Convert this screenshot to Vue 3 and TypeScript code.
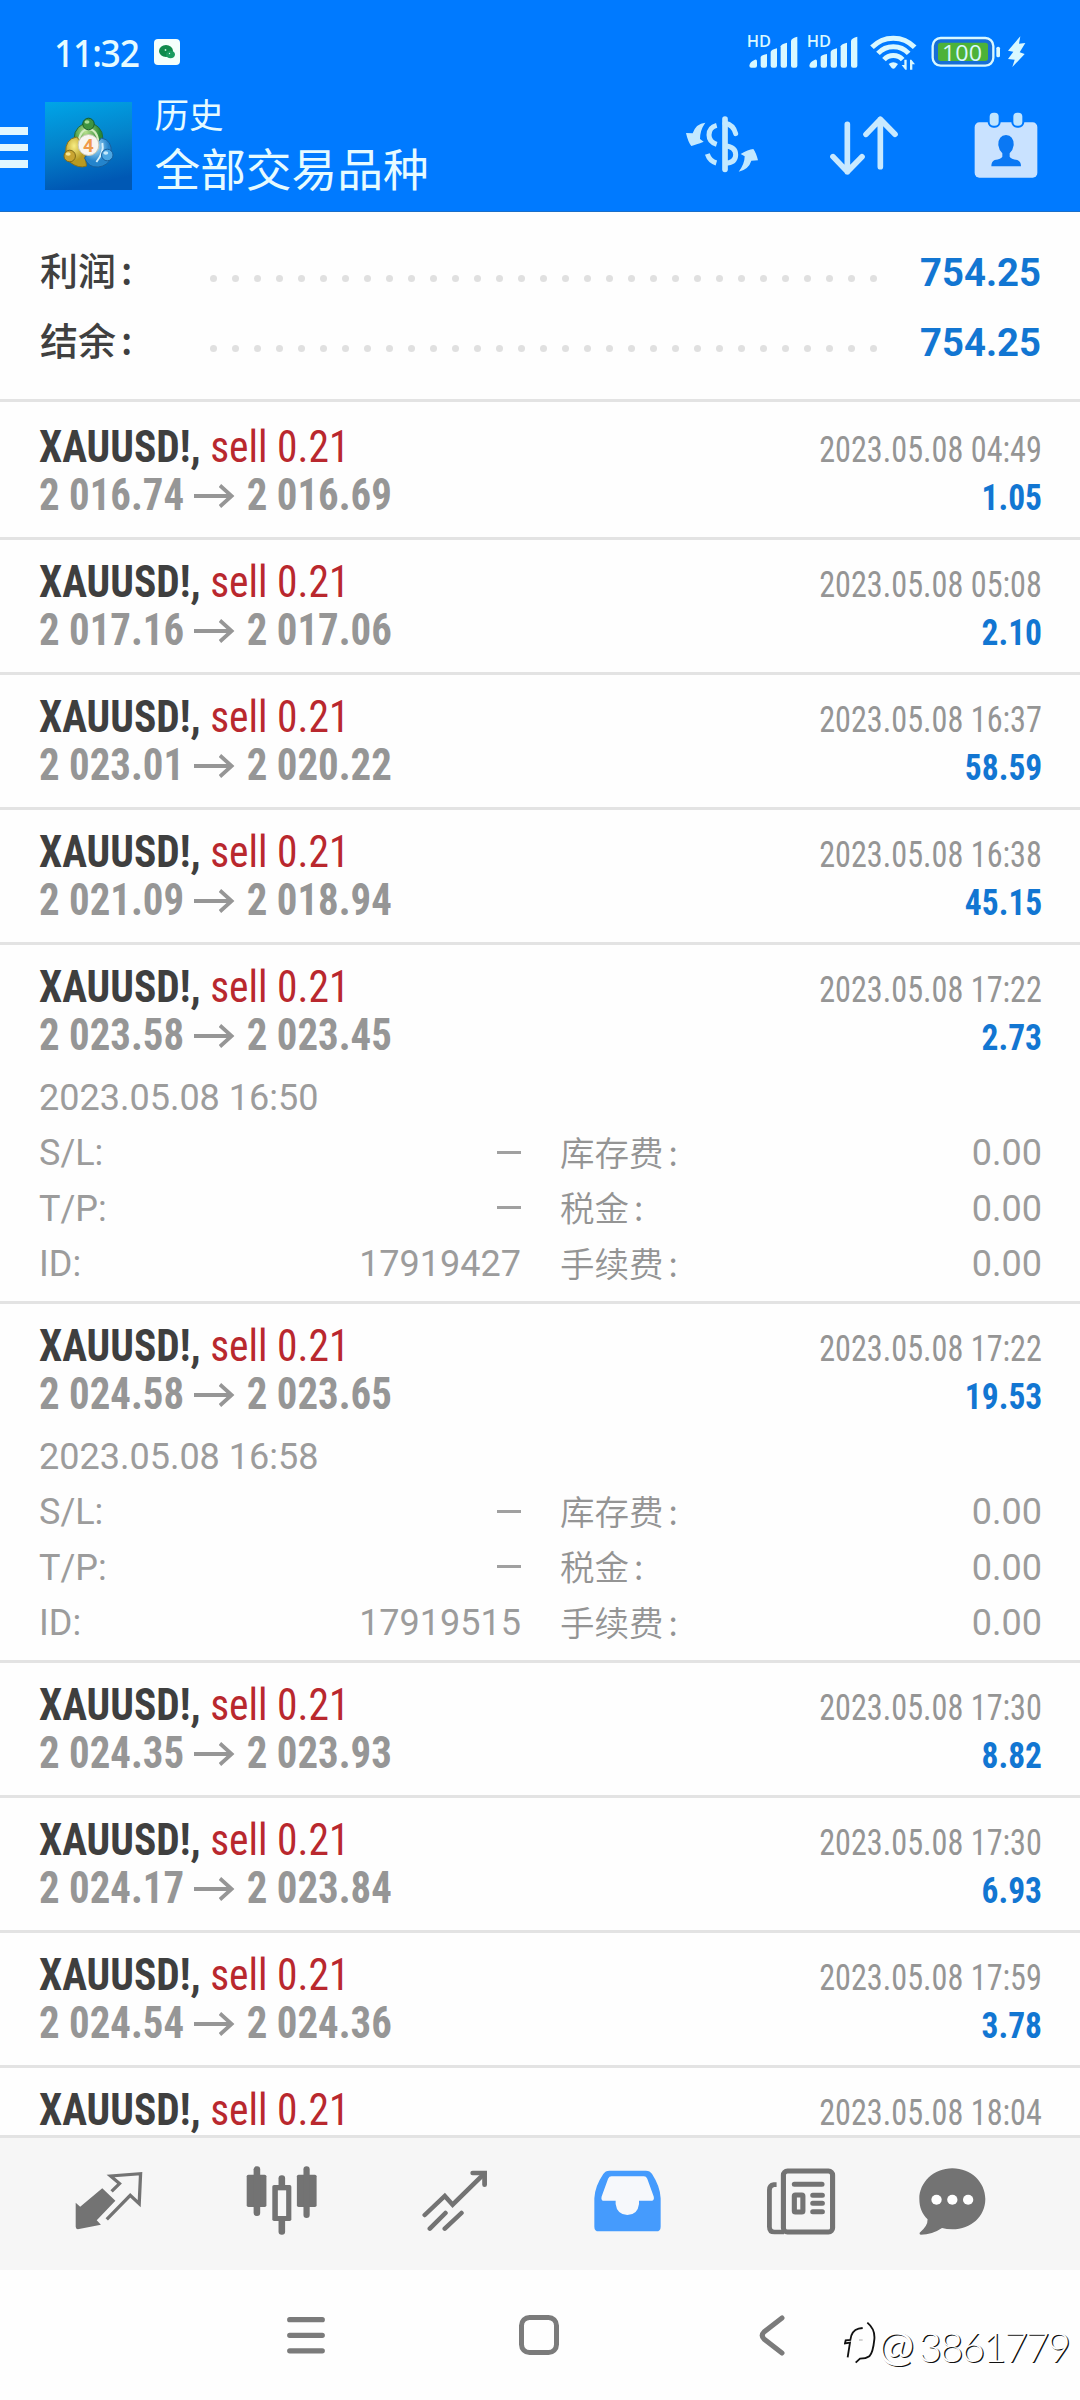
<script setup lang="ts">
interface Detail {
  opened: string
  id: string
}
interface Deal {
  time: string
  from?: string
  to?: string
  profit?: string
  detail?: Detail
}

const totals = [
  { label: '利润', value: '754.25' },
  { label: '结余', value: '754.25' },
]

const deals: Deal[] = [
  { from: '2 016.74', to: '2 016.69', time: '2023.05.08 04:49', profit: '1.05' },
  { from: '2 017.16', to: '2 017.06', time: '2023.05.08 05:08', profit: '2.10' },
  { from: '2 023.01', to: '2 020.22', time: '2023.05.08 16:37', profit: '58.59' },
  { from: '2 021.09', to: '2 018.94', time: '2023.05.08 16:38', profit: '45.15' },
  { from: '2 023.58', to: '2 023.45', time: '2023.05.08 17:22', profit: '2.73', detail: { opened: '2023.05.08 16:50', id: '17919427' } },
  { from: '2 024.58', to: '2 023.65', time: '2023.05.08 17:22', profit: '19.53', detail: { opened: '2023.05.08 16:58', id: '17919515' } },
  { from: '2 024.35', to: '2 023.93', time: '2023.05.08 17:30', profit: '8.82' },
  { from: '2 024.17', to: '2 023.84', time: '2023.05.08 17:30', profit: '6.93' },
  { from: '2 024.54', to: '2 024.36', time: '2023.05.08 17:59', profit: '3.78' },
  { time: '2023.05.08 18:04' },
]

function rows(d: Detail) {
  return [
    { label: 'S/L:', value: '—', fee: '库存费' },
    { label: 'T/P:', value: '—', fee: '税金' },
    { label: 'ID:', value: d.id, fee: '手续费' },
  ]
}
</script>

<template>
  <div class="phone">
    <header class="top">
      <div class="status">
        <span class="clock">11:32</span>
        <svg class="chat-badge" viewBox="0 0 26 26">
          <rect width="26" height="26" rx="4" fill="#f4fffb" />
          <ellipse cx="12" cy="12" rx="7" ry="6" fill="#0f8a4c" />
          <ellipse cx="16.500" cy="15.500" rx="4.500" ry="3.800" fill="#1a9c60" />
          <circle cx="11.500" cy="11" r=".9" fill="#bff0d8" />
          <circle cx="15.500" cy="14.500" r=".7" fill="#d8ffe9" />
        </svg>
        <svg class="status-icons" viewBox="305 70 855 150" fill="#d9f8ff">
          <g v-for="x in [0, 180]" :key="x" :transform="`translate(${x} 0)`">
            <text x="319" y="143" font-size="46" font-weight="600" textLength="73" lengthAdjust="spacingAndGlyphs">HD</text>
            <path d="M327 198Q328 186 344 180Q350 178 350 186V198Q350 204 344 204H333Q327 204 327 198z" />
            <path d="M361 172Q362 166 380 163V198Q380 204 374 204H367Q361 204 361 198z" />
            <path d="M391 157Q393 150 410 146V198Q410 204 404 204H397Q391 204 391 198z" />
            <path d="M421 140Q423 133 440 129V198Q440 204 434 204H427Q421 204 421 198z" />
            <path d="M452 123Q454 115 471 111V198Q471 204 465 204H458Q452 204 452 198z" />
          </g>
          <g fill="none" stroke="#d9f8ff" stroke-width="15">
            <path d="M695 143A88 88 0 0 1 823 143" />
            <path d="M713 161A63 63 0 0 1 805 161" />
            <path d="M731 180A38 38 0 0 1 787 180" />
          </g>
          <path d="M745 193Q759 182 773 193L764 205Q759 210 754 205z" />
          <path d="M784 196h8v-16h7v30h-4zM824 194h-8v16h-7v-30h4z" />
          <rect x="877" y="115" width="182" height="83" rx="24" fill="#176fd6" stroke="#d9f8ff" stroke-width="7" />
          <rect x="893" y="129" width="150" height="55" rx="8" fill="#4db238" />
          <text x="905" y="183" font-size="64" font-weight="500" textLength="120" lengthAdjust="spacingAndGlyphs">100</text>
          <rect x="1068" y="141" width="11" height="32" rx="5" />
          <path d="M1140 110L1103 153L1119 156L1103 178L1123 180L1116 202L1153 163L1138 158L1155 130L1136 132z" />
        </svg>
      </div>
      <div class="bar">
        <div class="burger"><i></i><i></i><i></i></div>
        <svg class="logo" viewBox="0 0 88 88" preserveAspectRatio="none">
          <defs>
            <linearGradient id="bg" x1="0" y1="0" x2=".2" y2="1">
              <stop offset="0" stop-color="#00a5e8" />
              <stop offset=".5" stop-color="#0484cc" />
              <stop offset="1" stop-color="#0058b4" />
            </linearGradient>
            <radialGradient id="gr" cx=".4" cy=".3"><stop offset="0" stop-color="#b8e08c" /><stop offset="1" stop-color="#2b8a35" /></radialGradient>
            <radialGradient id="ye" cx=".4" cy=".3"><stop offset="0" stop-color="#f8ee84" /><stop offset="1" stop-color="#b89a22" /></radialGradient>
            <radialGradient id="bl" cx=".4" cy=".3"><stop offset="0" stop-color="#b2e2fa" /><stop offset="1" stop-color="#2484cc" /></radialGradient>
          </defs>
          <rect width="88" height="88" fill="url(#bg)" />
          <ellipse cx="44" cy="36" rx="14.500" ry="15" fill="url(#gr)" stroke="#226a38" />
          <path d="M34 40Q35 28 44 27Q53 28 54 40" fill="none" stroke="#d4ecc0" stroke-width="2" />
          <path d="M21 51Q20 37 32 35Q38 40 40 50L42 64Q34 67 25 60z" fill="url(#ye)" stroke="#84701c" />
          <path d="M67 51Q68 38 57 36Q52 42 40 56Q44 66 54 65Q63 64 67 56z" fill="url(#bl)" stroke="#175f9c" />
          <path d="M58 41Q60 50 52 60" fill="none" stroke="#d6f0fc" stroke-width="2" />
          <circle cx="44" cy="22" r="5.800" fill="#3e9440" stroke="#175a28" />
          <circle cx="25" cy="54" r="5.800" fill="#c9a431" stroke="#806a18" />
          <circle cx="63" cy="53" r="5.800" fill="#4ba6e2" stroke="#175f9c" />
          <ellipse cx="42.500" cy="20" rx="2.500" ry="1.800" fill="#a8dc98" />
          <ellipse cx="23.500" cy="52" rx="2.500" ry="1.800" fill="#f6e694" />
          <ellipse cx="61.500" cy="51" rx="2.500" ry="1.800" fill="#c4e9fc" />
          <circle cx="44" cy="43" r="10.500" fill="#f8f5f0" stroke="#c8c8b4" />
          <text x="44" y="50" text-anchor="middle" font-size="19" font-weight="700" fill="#f09a4a">4</text>
        </svg>
        <div class="titles">
          <div class="small">历史</div>
          <div class="big">全部交易品种</div>
        </div>
        <svg class="act dollar" viewBox="48 48 218 170">
          <g fill="#c3e9ff">
            <path d="M106 68Q78 70 68 100L48 99Q54 126 64 138Q78 134 101 125L90 117Q90 90 106 68z" />
            <path d="M206 215Q236 208 244 182L264 181Q258 158 250 147Q234 148 212 162L224 169Q224 192 206 215z" />
          </g>
          <g fill="none" stroke="#c3e9ff" stroke-width="15">
            <path d="M140 76Q117 82 117 105Q117 126 140 133" />
            <path d="M112 162Q119 183 139 189" />
            <path d="M165 70Q190 74 197 101" stroke-linecap="round" />
            <path d="M165 138Q197 140 197 164Q197 189 165 189" />
            <path d="M165 57V208" stroke-width="17" stroke-linecap="round" />
          </g>
        </svg>
        <svg class="act sort" viewBox="483 48 204 177">
          <path d="M535 73V215M492 170L535 215L579 170M634 200V58M591 103L634 58L678 103" fill="none" stroke="#c8e9ff" stroke-width="17" stroke-linecap="round" stroke-linejoin="round" />
        </svg>
        <svg class="act cal" viewBox="1008 336 192 200">
          <rect x="1010" y="367" width="188" height="166" rx="14" fill="#c9e2ff" />
          <rect x="1049" y="330" width="39" height="53" rx="17" fill="#007aff" />
          <rect x="1120" y="330" width="39" height="53" rx="17" fill="#007aff" />
          <rect x="1055" y="338" width="27" height="39" rx="12" fill="#c0e5ff" />
          <rect x="1126" y="338" width="27" height="39" rx="12" fill="#c0e5ff" />
          <path d="M1104 405Q1128 407 1127 436Q1125 451 1115 460V470Q1118 477 1138 480Q1149 484 1149 499H1060Q1060 484 1070 480Q1090 477 1093 470V460Q1083 451 1081 436Q1080 407 1104 405z" fill="#0a78f4" />
        </svg>
      </div>
    </header>

    <section class="totals">
      <div v-for="t in totals" :key="t.label" class="total">
        <span class="t-label">{{ t.label }}<b>:</b></span>
        <span class="dots"><i v-for="n in 31" :key="n"></i></span>
        <span class="t-value">{{ t.value }}</span>
      </div>
    </section>

    <main class="list">
      <article v-for="(d, i) in deals" :key="i" class="deal">
        <div class="line">
          <span class="name"><b>XAUUSD!,</b> <em>sell 0.21</em></span>
          <span class="date">{{ d.time }}</span>
        </div>
        <div v-if="d.from" class="line">
          <span class="prices">{{ d.from }}<svg class="arrow" viewBox="0 0 44 24"><path d="M0 12H41M28 1.500L40.500 12L28 22.500" fill="none" stroke="#969696" stroke-width="4" /></svg>{{ d.to }}</span>
          <span class="profit">{{ d.profit }}</span>
        </div>
        <div v-if="d.detail" class="detail">
          <div class="d-row"><span>{{ d.detail.opened }}</span></div>
          <div v-for="r in rows(d.detail)" :key="r.label" class="d-row">
            <span class="half"><span>{{ r.label }}</span><i v-if="r.value === '—'" class="dash"></i><span v-else>{{ r.value }}</span></span>
            <span class="half"><span class="cjk">{{ r.fee }}<b>:</b></span><span>0.00</span></span>
          </div>
        </div>
      </article>
    </main>

    <nav class="tabs">
      <div class="tab">
        <svg width="68" height="60" viewBox="217 338 197 180" preserveAspectRatio="none">
          <path d="M296 390L334 427L280 486L292 499L225 513Q219 512 219 505V433L232 445z" fill="#737373" />
          <path d="M323 399L346 376L320 353L407 346L403 436L377 411L309 483" fill="none" stroke="#737373" stroke-width="9.500" />
        </svg>
      </div>
      <div class="tab">
        <svg width="72" height="70" viewBox="713 322 208 210" preserveAspectRatio="none" fill="#737373">
          <rect x="715" y="348" width="57" height="97" rx="5" /><rect x="735" y="323" width="19" height="149" rx="9" />
          <rect x="860" y="348" width="57" height="97" rx="5" /><rect x="879" y="323" width="18" height="155" rx="9" />
          <rect x="807" y="350" width="19" height="178" rx="9" /><rect x="789" y="379" width="55" height="108" rx="5" />
          <rect x="805" y="395" width="24" height="77" fill="#f6f6f6" />
        </svg>
      </div>
      <div class="tab">
        <svg width="66" height="64" viewBox="1222 328 194 192" preserveAspectRatio="none" fill="none" stroke="#737373" stroke-width="13.500" stroke-linecap="round">
          <path d="M1230 466L1289 409L1312 435L1405 342M1245 507L1291 460M1289 507L1338 460" />
          <path d="M1371 340H1406V375" stroke-width="14" />
        </svg>
      </div>
      <div class="tab">
        <svg width="67" height="62" viewBox="157 330 195 186" preserveAspectRatio="none">
          <path d="M202 332H308Q320 332 326 342Q350 380 351 415V500Q351 514 338 514H171Q158 514 158 500V415Q159 380 184 342Q190 332 202 332z" fill="#459bfd" />
          <path d="M208 349H302Q309 349 312 356L331 410Q333 421 325 422H288V432Q284 465 254 465Q224 464 220 432V422H184Q177 421 179 410L198 356Q201 349 208 349z" fill="#f6f8fb" />
        </svg>
      </div>
      <div class="tab">
        <svg width="70" height="67" viewBox="655 322 205 201" preserveAspectRatio="none" fill="none" stroke="#737373" stroke-width="15">
          <rect x="706" y="331" width="144" height="183" rx="12" />
          <path d="M686 372H678Q665 374 665 388V498Q665 514 680 514H708" stroke-width="14" />
          <path d="M738 371H819M792 404H820M792 428H820M792 453H820" stroke-linecap="round" />
          <rect x="738" y="403" width="25" height="51" rx="3" />
        </svg>
      </div>
      <div class="tab last">
        <svg width="67" height="67" viewBox="1102 322 195 201" preserveAspectRatio="none">
          <path d="M1199 323C1254 323 1295 365 1295 415C1295 467 1254 506 1199 506Q1182 506 1169 502Q1141 522 1107 522Q1102 521 1104 516Q1128 496 1127 476C1111 460 1103 440 1103 415C1103 365 1145 323 1199 323z" fill="#737373" />
          <circle cx="1153" cy="417" r="15" fill="#fff" /><circle cx="1199" cy="417" r="15" fill="#fff" /><circle cx="1245" cy="417" r="15" fill="#fff" />
        </svg>
      </div>
    </nav>

    <footer class="sys">
      <svg class="k-menu" viewBox="0 0 38 37" stroke="#7b7b7b" stroke-width="5.200" stroke-linecap="round"><path d="M2.700 2.700H35.300M2.700 18.300H35.300M2.700 33.800H35.300" /></svg>
      <svg class="k-home" viewBox="0 0 40 40"><rect x="2.500" y="2.500" width="35" height="35" rx="8" fill="none" stroke="#7b7b7b" stroke-width="5" /></svg>
      <svg class="k-back" viewBox="0 0 26 41"><path d="M23 3L5 17Q1.500 20.500 5 24L23 38" fill="none" stroke="#7b7b7b" stroke-width="5" stroke-linecap="round" /></svg>
      <div class="mark">
        <svg width="34" height="44" viewBox="28 40 102 132" fill="none" stroke="#111">
          <path d="M39 146Q43 120 46 102L31 104L33 95L47 94Q50 66 72 60L84 58" stroke-width="5.500" />
          <path d="M98 42Q122 62 119 92Q115 132 104 143Q94 150 76 150L63 162" stroke-width="5.500" />
          <path d="M73 94H84" stroke="#aaa" stroke-width="3" />
        </svg>
        <span class="at">@</span><span class="num">3861779</span>
      </div>
    </footer>
  </div>
</template>

<style>
body { background: #fefefe; }
</style>

<style scoped>
.phone {
  width: 1080px;
  height: 2400px;
  overflow: hidden;
  display: flex;
  flex-direction: column;
  background: #fefefe;
  font-family: Roboto, 'Noto Sans CJK SC', sans-serif;
}
svg { display: block; flex: none; }
.top {
  height: 211.500px;
  box-sizing: border-box;
  background: #007aff;
  border-bottom: 1.500px solid #1a6fc9;
  color: #e6fbff;
}
.status { display: flex; height: 90px; padding: 0 13px 0 54px; align-items: flex-start; }
.clock { width: 100px; margin-top: 24px; font: 500 38.5px/56px 'Noto Sans', sans-serif; white-space: nowrap; transform: scaleX(.92); transform-origin: 0 50%; letter-spacing: -1.300px; }
.chat-badge { width: 26px; height: 26px; margin-top: 39px; }
.status-icons { width: 285px; height: 50px; margin: 23px 40px 0 auto; font-family: 'Open Sans', sans-serif; }
.bar { display: flex; height: 119px; align-items: flex-start; }
.burger { width: 27.500px; margin: 37px 17px 0 0; display: flex; flex-direction: column; gap: 9px; }
.burger i { height: 7.700px; background: #e0f7ff; }
.logo { width: 87px; height: 88px; margin-top: 12px; }
.titles { margin: 3px 0 0 23px; font-family: 'Noto Sans CJK SC', sans-serif; width: 532px; flex: none; }
.small { font-size: 34.500px; line-height: 40px; height: 40px; }
.big { font-size: 45.700px; line-height: 60px; margin-top: 4px; height: 60px; }
.dollar { width: 72.700px; height: 56.700px; margin: 26px 0 0 -1px; }
.sort { width: 68px; height: 59px; margin: 26px 0 0 72px; }
.cal { width: 64px; height: 66.700px; margin: 22px 0 0 76px; }

.totals { height: 187.500px; padding: 24.500px 39px 0 40px; box-sizing: border-box; flex: none; }
.total { display: flex; height: 70px; align-items: center; }
.t-label { width: 170px; height: 74px; font: 500 38px/70px 'Noto Sans CJK SC', sans-serif; color: #404040; white-space: nowrap; }
.t-label b, .cjk b { font-weight: inherit; margin-left: 5px; }
.dots { display: flex; width: 667px; justify-content: space-between; margin-top: 15px; }
.dots i { width: 7px; height: 7px; border-radius: 50%; background: #e0e0e0; }
.t-value { margin: 2px 0 0 auto; font-size: 38.300px; font-weight: 700; color: #1276d2; }

.list { height: 1736px; overflow: hidden; flex: none; }
.deal { border-top: 3px solid #e3e3e3; padding: 18px 38px 0 39px; height: 135px; box-sizing: border-box; }
.deal:first-child { padding-top: 21px; height: 138px; }
.deal:last-child { height: 72px; }
.deal:has(.detail) { height: 359px; }
.line { display: flex; justify-content: space-between; align-items: baseline; height: 48px; line-height: 48px; white-space: nowrap; }
.name, .prices { font-family: 'Roboto Condensed', Roboto, sans-serif; font-size: 44px; transform-origin: 0 50%; }
.name { transform: scaleX(.942); color: #3f3f3f; }
.name em { font-style: normal; color: #b9282e; }
.prices { transform: scaleX(.928); font-weight: 700; color: #969696; }
.arrow { display: inline-block; width: 44px; height: 24px; margin: 0 13px 2.500px 10.500px; vertical-align: baseline; }
.date, .profit { font-family: 'Roboto Condensed', Roboto, sans-serif; font-size: 36px; transform-origin: 100% 50%; transform: scaleX(.895); color: #959595; }
.profit { font-weight: 700; color: #1276d2; transform: scaleX(.93); }
.detail { padding-top: 12px; font-size: 36px; color: #9c9c9c; font-weight: 400; }
.d-row { display: flex; height: 55.400px; line-height: 55.400px; justify-content: space-between; white-space: nowrap; }
.half { display: flex; width: 482px; justify-content: space-between; align-items: center; }
.cjk { font-family: 'Noto Sans CJK SC', sans-serif; font-weight: 350; font-size: 34.500px; height: 60px; color: #949494; }
.dash { width: 24px; height: 3px; background: #a0a0a0; margin-top: -3px; }

.tabs { height: 135px; border-top: 3px solid #e3e3e3; box-sizing: border-box; background: #f6f6f6; display: flex; padding-left: 22px; flex: none; }
.tab { width: 173px; height: 126px; display: flex; align-items: center; justify-content: center; }
.tab.last { width: 130px; }
.sys { flex: 1; display: flex; align-items: flex-start; }
.k-menu { width: 38px; height: 37px; margin: 47px 0 0 287px; }
.k-home { width: 40px; height: 40px; margin: 45px 0 0 194px; }
.k-back { width: 26px; height: 41px; margin: 45px 0 0 200px; }
.mark { display: flex; margin: 52px 0 0 59px; font-family: Lato, sans-serif; font-weight: 300; color: #fff; text-shadow: 1.300px 1.300px 0 #111; white-space: nowrap; }
.at { font-size: 43px; line-height: 46px; width: 40px; font-weight: 400; margin-left: 0; }
.num { font-size: 41px; line-height: 49px; letter-spacing: -2.300px; }
</style>
